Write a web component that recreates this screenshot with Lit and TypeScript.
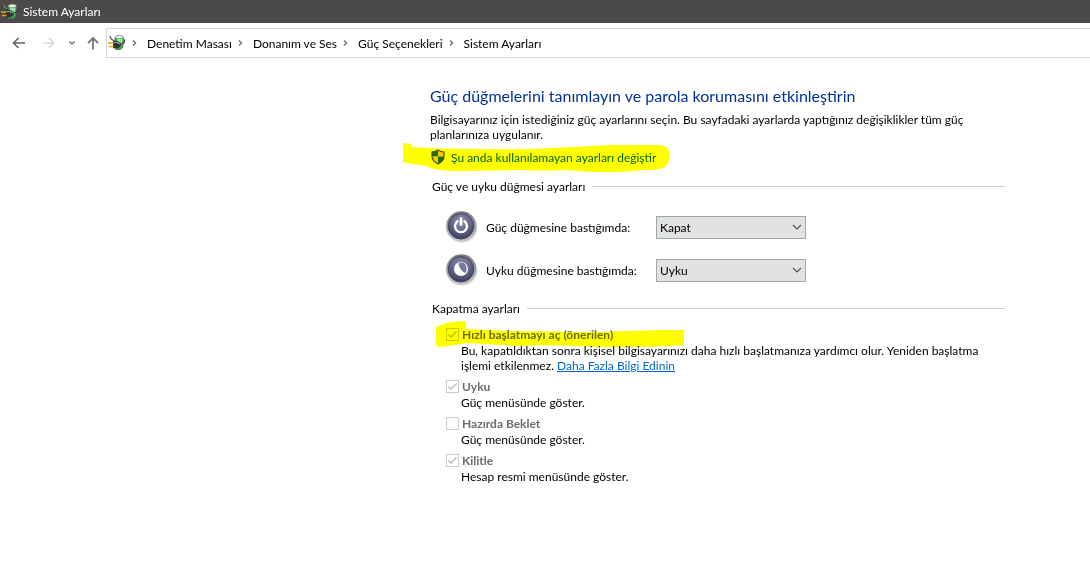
import { LitElement, html, css, svg, nothing } from "lit";
import { customElement, property } from "lit/decorators.js";

const baseText = css`
  :host {
    font-family: Lato, "Open Sans", sans-serif;
    font-size: 12px;
    line-height: 15px;
    color: #000;
  }
`;

@customElement("power-plan-icon")
class PowerPlanIcon extends LitElement {
  static styles = css`
    :host { display: block; width: 18px; height: 18px; flex: none; }
    svg { display: block; }
  `;
  render() {
    return html`<svg width="18" height="18" viewBox="0 0 18 18" aria-hidden="true">
      <path d="M7 3.500L15.500 3.500L14.800 13.500Q12 17 7.500 15.200Z" fill="#1fa53c" stroke="#5f6b62" stroke-width=".8" />
      <path d="M9 4.500H14.500L14.200 9H9Z" fill="#8df09f" />
      <path d="M12.500 9L13.800 9L13.300 13L12.200 13.500Z" fill="#55d670" />
      <ellipse cx="11.300" cy="3" rx="4" ry="1.800" fill="#e4ebe5" stroke="#7d847f" stroke-width=".7" />
      <path d="M2 1.800Q2.300 5.800 6.500 6.500M13.500 10Q17.300 9 16.500 5.500" fill="none" stroke="#3d3d3d" stroke-width="1.200" />
      <path d="M2.500 2Q3 5 6 5.700" fill="none" stroke="#c5c8c5" stroke-width=".6" />
      <path d="M5 7H9L12.800 8.800V12.200L9 14.300H5Z" fill="#303236" />
      <path d="M5.800 8.500H9L12 9.900" fill="none" stroke="#a3a7ac" stroke-width="1.200" />
      <path d="M0 9H5.500M1 12.500H5.500" stroke="#e5a700" stroke-width="1.500" />
    </svg>`;
  }
}

@customElement("title-bar")
class TitleBar extends LitElement {
  static styles = [baseText, css`
    :host {
      display: flex;
      align-items: center;
      gap: 4px;
      height: 23px;
      padding-left: 1px;
      background: #4c4a48;
      color: #fff;
    }
  `];
  render() {
    return html`<power-plan-icon></power-plan-icon><span>Sistem Ayarları</span>`;
  }
}

@customElement("nav-bar")
class NavBar extends LitElement {
  static styles = [baseText, css`
    :host { display: flex; padding-top: 5px; }
    button {
      display: block;
      border: 0;
      padding: 0;
      background: none;
      height: 30px;
    }
    svg { display: block; }
    .buttons { display: flex; width: 106px; flex: none; box-sizing: border-box; padding-left: 12px; }
    .wide { width: 28px; }
    .small { width: 18px; }
    .address {
      flex: 1;
      min-width: 0;
      display: flex;
      align-items: center;
      height: 28px;
      border: 1px solid #d9d9d9;
      border-right: 0;
      padding-left: 1px;
    }
    .crumb { display: flex; align-items: center; white-space: nowrap; }
    .crumb a { color: #000; text-decoration: none; }
  `];
  render() {
    const crumbs = ["Denetim Masası", "Donanım ve Ses", "Güç Seçenekleri", "Sistem Ayarları"];
    return html`
      <div class="buttons">
        <button class="wide" aria-label="Geri">
          <svg width="14" height="14" viewBox="0 0 14 14" fill="none" stroke="#666" stroke-width="1.600"><path d="M13 7H1.500M6.500 2L1.500 7L6.500 12" /></svg>
        </button>
        <button class="wide" aria-label="İleri" disabled>
          <svg width="14" height="14" viewBox="0 0 14 14" fill="none" stroke="#d8d8d8" stroke-width="1.600"><path d="M3 7H14M9 2L14 7L9 12" /></svg>
        </button>
        <button class="small" aria-label="Son konumlar">
          <svg width="8" height="6" viewBox="0 0 8 6" fill="none" stroke="#777" stroke-width="1.500"><path d="M1.500 1.500L4 4L6.500 1.500" /></svg>
        </button>
        <button class="small" aria-label="Yukarı">
          <svg width="14" height="14" viewBox="0 0 14 14" fill="none" stroke="#777" stroke-width="1.800"><path d="M7 13.500V2M2 7L7 2L12 7" /></svg>
        </button>
      </div>
      <nav class="address">
        <power-plan-icon></power-plan-icon>
        ${crumbs.map((c) => html`<span class="crumb">
          <svg width="21" height="8" viewBox="0 0 21 8" fill="none" stroke="#777" stroke-width="1.500" aria-hidden="true"><path d="M7 1.500L9.500 4L7 6.500" /></svg>
          <a href="#">${c}</a></span>`)}
      </nav>`;
  }
}

@customElement("section-heading")
class SectionHeading extends LitElement {
  static styles = [baseText, css`
    :host { display: flex; align-items: center; gap: 7px; padding-left: 2px; }
    h2 { margin: 0; font: inherit; }
    span { flex: 1; height: 1px; background: #ccc; }
  `];
  render() {
    return html`<h2><slot></slot></h2><span></span>`;
  }
}

@customElement("button-action")
class ButtonAction extends LitElement {
  @property() kind = "power";
  @property() label = "";
  @property() value = "";

  static styles = [baseText, css`
    :host { display: grid; grid-template-columns: 32px 162px 150px; column-gap: 8px; align-items: center; height: 34px; }
    svg { display: block; }
    .field { position: relative; }
    select {
      display: block;
      appearance: none;
      box-sizing: border-box;
      width: 100%;
      height: 23px;
      margin: 0;
      padding: 0 20px 0 3px;
      border: 1px solid #a2a7ab;
      border-radius: 0;
      background: #e1e3e2;
      color: #000;
      font: inherit;
    }
    .arrow { position: absolute; right: 4px; top: 8px; pointer-events: none; }
  `];
  render() {
    const glyph = this.kind === "power"
      ? svg`<path d="M11.500 11.300A6 6 0 1 0 18.500 11.300" fill="none" stroke="#fff" stroke-width="2.400" stroke-linecap="round" /><path d="M15 7.500V15.500" stroke="#a0a0b4" stroke-width="4" /><path d="M15 7.500V15.500" stroke="#fff" stroke-width="2.400" />`
      : svg`<circle cx="15" cy="16" r="7" fill="#fff" /><path d="M12.500 10.500Q16 8.500 19 11Q22 15 19.500 20Q14 18 12.500 10.500Z" fill="#77779a" />`;
    return html`
      <svg width="32" height="34" viewBox="0 0 32 34" aria-hidden="true">
        <defs>
          <linearGradient id="rim" x1="0" y1="0" x2="0" y2="1"><stop offset="0" stop-color="#77777c" /><stop offset="1" stop-color="#c6c6ca" /></linearGradient>
          <radialGradient id="face" cx=".5" cy=".3" r=".7"><stop offset="0" stop-color="#9090a8" /><stop offset=".55" stop-color="#65658a" /><stop offset="1" stop-color="#3b3b60" /></radialGradient>
        </defs>
        <ellipse cx="16" cy="18" rx="15.500" ry="15" fill="#e6e6e8" />
        <circle cx="15.300" cy="16.500" r="15.200" fill="url(#rim)" />
        <circle cx="15" cy="16.300" r="12.700" fill="url(#face)" stroke="#45455d" stroke-width="1" />
        ${glyph}
      </svg>
      <label for="action">${this.label}</label>
      <div class="field">
        <select id="action"><option selected>${this.value}</option></select>
        <svg class="arrow" width="10" height="7" viewBox="0 0 10 7" fill="none" stroke="#555" stroke-width="1.200" aria-hidden="true"><path d="M1 1L5 5L9 1" /></svg>
      </div>`;
  }
}

@customElement("shutdown-option")
class ShutdownOption extends LitElement {
  @property() label = "";
  @property({ type: Boolean }) checked = false;
  @property({ type: Boolean }) marked = false;

  static styles = [baseText, css`
    :host { display: block; position: relative; }
    .row { display: flex; align-items: center; gap: 3px; height: 18px; }
    input {
      appearance: none;
      box-sizing: border-box;
      flex: none;
      width: 13px;
      height: 13px;
      margin: 0;
      border: 1px solid #ccc;
      background: #fff;
    }
    input:checked {
      background: #fff url("data:image/svg+xml,%3Csvg xmlns='http://www.w3.org/2000/svg' viewBox='0 0 11 11'%3E%3Cpath d='M1.500 5.500L4 8L9.500 2.500' fill='none' stroke='%23b8b8b8' stroke-width='1.300'/%3E%3C/svg%3E");
    }
    label { font-weight: 700; color: #6d6d6d; white-space: nowrap; }
    .detail { padding-left: 15px; }
    .marker { position: absolute; left: -12px; top: -5px; mix-blend-mode: multiply; pointer-events: none; }
  `];
  render() {
    return html`
      <div class="row">
        <input type="checkbox" id="option" disabled .checked=${this.checked} />
        <label for="option">${this.label}</label>
      </div>
      <div class="detail"><slot></slot></div>
      ${this.marked
        ? html`<svg class="marker" width="252" height="30" viewBox="0 0 252 30" aria-hidden="true">
            <path d="M2 7Q12 1 32 1V9Q80 12 160 12L227 10H250V25Q210 28 162 27Q120 24 85 26L32 23Q18 26 5 27Q0 26 2 19Z" fill="#ff0" />
          </svg>`
        : nothing}`;
  }
}

@customElement("app-root")
class AppRoot extends LitElement {
  static styles = [baseText, css`
    :host { display: block; min-height: 100vh; background: #fff; }
    main {
      display: grid;
      grid-template-columns: minmax(0, 575px);
      padding: 27px 16px 16px 430px;
    }
    h1 { margin: 0 0 6px; font-size: 16px; line-height: 21px; font-weight: 400; color: #003399; }
    p { margin: 0; }
    .admin { position: relative; display: flex; align-items: center; gap: 6px; height: 16px; margin: 7px 0 14px 1px; }
    .admin a { color: #0066cc; text-decoration: none; }
    .admin svg { display: block; }
    .admin .marker { position: absolute; left: -29px; top: -6px; mix-blend-mode: multiply; pointer-events: none; }
    .actions { display: grid; gap: 9px; padding: 16px 0 14px 16px; }
    .options { display: grid; gap: 4px; padding: 9px 0 0 16px; }
    .more { color: #0066cc; }
  `];
  render() {
    return html`
      <title-bar></title-bar>
      <nav-bar></nav-bar>
      <main>
        <h1>Güç düğmelerini tanımlayın ve parola korumasını etkinleştirin</h1>
        <p>Bilgisayarınız için istediğiniz güç ayarlarını seçin. Bu sayfadaki ayarlarda yaptığınız değişiklikler tüm güç planlarınıza uygulanır.</p>
        <div class="admin">
          <svg width="14" height="16" viewBox="0 0 14 16" aria-hidden="true">
            <path d="M7 1Q10 3 13 3V7.500H7Z" fill="#ffc928" />
            <path d="M7 1Q4 3 1 3V7.500H7Z" fill="#1673b5" />
            <path d="M1 7.500H7V15Q1.500 12 1 7.500Z" fill="#ffc928" />
            <path d="M13 7.500H7V15Q12.500 12 13 7.500Z" fill="#1673b5" />
            <path d="M7 1Q10 3 13 3V7Q13 12 7 15Q1 12 1 7V3Q4 3 7 1Z" fill="none" stroke="#4c4c4c" stroke-width="1.200" />
          </svg>
          <a href="#">Şu anda kullanılamayan ayarları değiştir</a>
          <svg class="marker" width="268" height="32" viewBox="0 0 268 32" aria-hidden="true">
            <path d="M1 0L9 1V4Q60 7 130 6L210 2H258Q266 3 267 8Q268 18 265 22Q262 27 245 27L215 29Q190 30 165 27Q140 28 120 27L60 28Q30 28 25 23Q8 21 1 19Z" fill="#ff0" />
          </svg>
        </div>
        <section-heading>Güç ve uyku düğmesi ayarları</section-heading>
        <div class="actions">
          <button-action kind="power" label="Güç düğmesine bastığımda:" value="Kapat"></button-action>
          <button-action kind="sleep" label="Uyku düğmesine bastığımda:" value="Uyku"></button-action>
        </div>
        <section-heading>Kapatma ayarları</section-heading>
        <div class="options">
          <shutdown-option label="Hızlı başlatmayı aç (önerilen)" checked marked>Bu, kapatıldıktan sonra kişisel bilgisayarınızı daha hızlı başlatmanıza yardımcı olur. Yeniden başlatma işlemi etkilenmez. <a class="more" href="#">Daha Fazla Bilgi Edinin</a></shutdown-option>
          <shutdown-option label="Uyku" checked>Güç menüsünde göster.</shutdown-option>
          <shutdown-option label="Hazırda Beklet">Güç menüsünde göster.</shutdown-option>
          <shutdown-option label="Kilitle" checked>Hesap resmi menüsünde göster.</shutdown-option>
        </div>
      </main>`;
  }
}
